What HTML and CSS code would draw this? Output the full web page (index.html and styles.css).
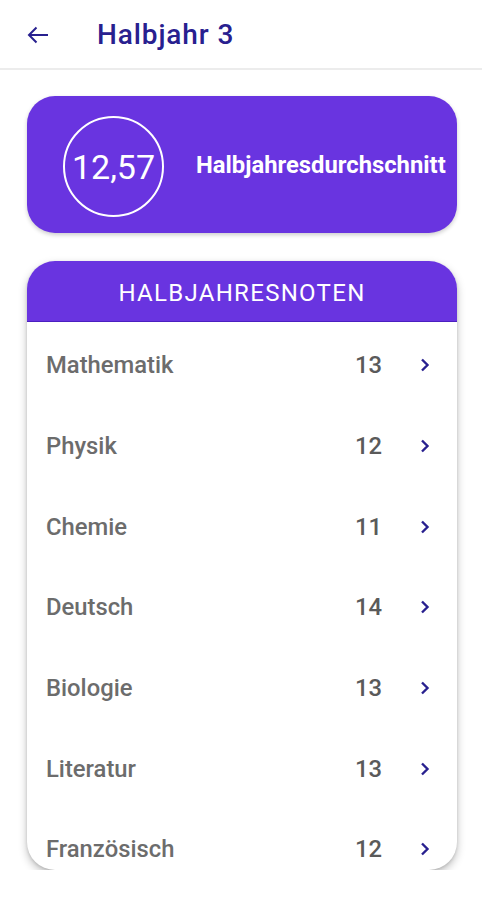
FILE: index.html
```html
<!DOCTYPE html>
<html lang="de">
<head>
<meta charset="utf-8">
<title>Halbjahr 3</title>
<link rel="stylesheet" href="styles.css">
</head>
<body>
<header class="appbar">
  <svg class="back" width="22" height="18" viewBox="0 0 22 18"><path d="M21 9H2.5M9.5 1.5L2 9l7.5 7.5" fill="none" stroke="#28208f" stroke-width="2"/></svg>
  <h1 class="title">Halbjahr 3</h1>
</header>
<main class="content">
  <section class="avg-card">
    <div class="avg-circle">12,57</div>
    <div class="avg-label">Halbjahresdurchschnitt</div>
  </section>
  <section class="grades-card">
    <div class="grades-head">HALBJAHRESNOTEN</div>
    <ul class="grades-list">
      <li class="row"><span class="subject">Mathematik</span><span class="grade">13</span><svg class="chev" width="10" height="14" viewBox="0 0 10 14"><path d="M2 1.5L7.5 7 2 12.5" fill="none" stroke="#28208f" stroke-width="2.4"/></svg></li>
      <li class="row"><span class="subject">Physik</span><span class="grade">12</span><svg class="chev" width="10" height="14" viewBox="0 0 10 14"><path d="M2 1.5L7.5 7 2 12.5" fill="none" stroke="#28208f" stroke-width="2.4"/></svg></li>
      <li class="row"><span class="subject">Chemie</span><span class="grade">11</span><svg class="chev" width="10" height="14" viewBox="0 0 10 14"><path d="M2 1.5L7.5 7 2 12.5" fill="none" stroke="#28208f" stroke-width="2.4"/></svg></li>
      <li class="row"><span class="subject">Deutsch</span><span class="grade">14</span><svg class="chev" width="10" height="14" viewBox="0 0 10 14"><path d="M2 1.5L7.5 7 2 12.5" fill="none" stroke="#28208f" stroke-width="2.4"/></svg></li>
      <li class="row"><span class="subject">Biologie</span><span class="grade">13</span><svg class="chev" width="10" height="14" viewBox="0 0 10 14"><path d="M2 1.5L7.5 7 2 12.5" fill="none" stroke="#28208f" stroke-width="2.4"/></svg></li>
      <li class="row"><span class="subject">Literatur</span><span class="grade">13</span><svg class="chev" width="10" height="14" viewBox="0 0 10 14"><path d="M2 1.5L7.5 7 2 12.5" fill="none" stroke="#28208f" stroke-width="2.4"/></svg></li>
      <li class="row"><span class="subject">Französisch</span><span class="grade">12</span><svg class="chev" width="10" height="14" viewBox="0 0 10 14"><path d="M2 1.5L7.5 7 2 12.5" fill="none" stroke="#28208f" stroke-width="2.4"/></svg></li>
    </ul>
  </section>
</main>
</body>
</html>
```
FILE: styles.css
```css
* { box-sizing: border-box; }
body {
  margin: 0;
  background: #ffffff;
  font-family: Roboto, "Liberation Sans", sans-serif;
}
.appbar {
  height: 70px;
  display: flex;
  align-items: center;
  padding-left: 27px;
  border-bottom: 2px solid #ececec;
}
.back { display: block; margin-top: 1px; }
.title {
  margin: 0 0 0 48px;
  font-size: 28px;
  font-weight: 500;
  color: #28208f;
  letter-spacing: 0.9px;
}
.content {
  padding: 26px 25px 0 27px;
}
.avg-card {
  height: 137px;
  background: #6934e0;
  border-radius: 28px;
  display: flex;
  align-items: center;
  padding-left: 36px;
  box-shadow: 0 2px 4px rgba(0,0,0,0.2);
}
.avg-circle {
  width: 101px;
  height: 101px;
  flex-shrink: 0;
  border: 2px solid #ffffff;
  border-radius: 50%;
  display: flex;
  align-items: center;
  justify-content: center;
  color: #ffffff;
  font-size: 34px;
  font-weight: 400;
  margin-top: 4px;
}
.avg-label {
  margin-left: 32px;
  color: #ffffff;
  font-size: 23.8px;
  font-weight: 700;
  white-space: nowrap;
}
.grades-card {
  margin-top: 28px;
  height: 609px;
  border-radius: 28px;
  overflow: hidden;
  background: #ffffff;
  box-shadow: 0 4px 8px rgba(0,0,0,0.25), 0 1px 3px rgba(0,0,0,0.12);
}
.grades-head {
  height: 61px;
  background: #6934e0;
  color: #ffffff;
  font-size: 24px;
  letter-spacing: 1.3px;
  display: flex;
  align-items: center;
  justify-content: center;
  padding-top: 4px;
  border-bottom: 1.5px solid #4b1fc0;
}
.grades-list {
  list-style: none;
  margin: 0;
  padding: 3px 0 0;
}
.row {
  height: 80.67px;
  display: flex;
  align-items: center;
  padding: 0 27px 0 19px;
}
.subject {
  flex: 1;
  font-size: 23.8px;
  font-weight: 500;
  color: #6c6c6c;
}
.grade {
  font-size: 23.8px;
  font-weight: 500;
  color: #5a5a5a;
  margin-right: 38px;
}
.chev { display: block; }
```
